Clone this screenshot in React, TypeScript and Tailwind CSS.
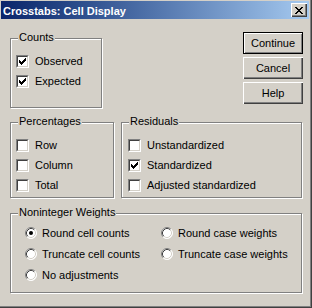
import type { ReactNode } from "react";

const FONT = { fontFamily: '"Liberation Sans", Arial, sans-serif' };

function CheckMark() {
  // classic 7x7 pixel tick
  const px = [
    [6, 0], [5, 1], [6, 1], [0, 2], [4, 2], [5, 2], [6, 2],
    [0, 3], [1, 3], [3, 3], [4, 3], [5, 3],
    [0, 4], [1, 4], [2, 4], [3, 4], [4, 4],
    [1, 5], [2, 5], [3, 5], [2, 6],
  ];
  return (
    <svg width="7" height="7" viewBox="0 0 7 7" shapeRendering="crispEdges">
      {px.map(([x, y]) => (
        <rect key={`${x}-${y}`} x={x} y={y} width="1" height="1" fill="#000" />
      ))}
    </svg>
  );
}

function Checkbox({ label, checked }: { label: string; checked?: boolean }) {
  return (
    <div className="flex items-center h-[13px] gap-[6px]">
      <div className="w-[13px] h-[13px] flex border border-t-[#808080] border-l-[#808080] border-r-white border-b-white">
        <div className="flex-1 flex items-center justify-center bg-white border border-t-[#404040] border-l-[#404040] border-r-[#d4d0c8] border-b-[#d4d0c8]">
          {checked && <CheckMark />}
        </div>
      </div>
      <span className="text-[11px] leading-[13px] text-black whitespace-nowrap">{label}</span>
    </div>
  );
}

function Radio({ label, checked }: { label: string; checked?: boolean }) {
  return (
    <div className="flex items-center h-[12px] gap-[5px]">
      <svg width="12" height="12" viewBox="0 0 12 12">
        <circle cx="6" cy="6" r="5.5" fill="#fff" />
        <path d="M2.11 9.89 A5.5 5.5 0 0 1 9.89 2.11" stroke="#808080" fill="none" />
        <path d="M9.89 2.11 A5.5 5.5 0 0 1 2.11 9.89" stroke="#fff" fill="none" />
        <path d="M2.82 9.18 A4.5 4.5 0 0 1 9.18 2.82" stroke="#404040" fill="none" />
        <path d="M9.18 2.82 A4.5 4.5 0 0 1 2.82 9.18" stroke="#d4d0c8" fill="none" />
        {checked && <circle cx="6" cy="6" r="2" fill="#000" />}
      </svg>
      <span className="text-[11px] leading-[13px] text-black whitespace-nowrap">{label}</span>
    </div>
  );
}

function Group({ title, className, children }: { title: string; className: string; children: ReactNode }) {
  return (
    <div
      className={`relative border border-[#808080] shadow-[1px_1px_0_#fff,inset_1px_1px_0_#fff] ${className}`}
    >
      <span className="absolute top-[-8px] left-[7px] px-[1px] bg-[#d4d0c8] text-[11px] leading-[13px] text-black">
        {title}
      </span>
      {children}
    </div>
  );
}

function Button({ label, isDefault }: { label: string; isDefault?: boolean }) {
  return (
    <div
      className={
        isDefault
          ? "w-[60px] h-[22px] flex items-center justify-center border border-black shadow-[inset_1px_1px_0_#fff,inset_-1px_-1px_0_#808080] text-[11px] text-black"
          : "w-[60px] h-[22px] flex items-center justify-center shadow-[inset_1px_1px_0_#fff,inset_-1px_-1px_0_#404040,inset_-2px_-2px_0_#808080] text-[11px] text-black"
      }
    >
      {label}
    </div>
  );
}

export default function App() {
  return (
    <div
      style={FONT}
      className="w-[312px] h-[308px] bg-[#d4d0c8] flex flex-col shadow-[inset_-1px_-1px_0_#404040,inset_-2px_-2px_0_#808080] overflow-hidden"
    >
      {/* Title bar */}
      <div className="mt-[1px] ml-[1px] mr-[3px] h-[18px] flex items-center justify-between pl-[2px] pr-[2px] bg-gradient-to-r from-[#0a246a] to-[#a6caf0]">
        <span className="text-[11px] font-bold text-white leading-[18px] pt-[1px]">Crosstabs: Cell Display</span>
        <div className="w-[16px] h-[14px] flex items-center justify-center bg-[#d4d0c8] shadow-[inset_1px_1px_0_#fff,inset_-1px_-1px_0_#404040,inset_-2px_-2px_0_#808080]">
          <svg width="8" height="7" viewBox="0 0 8 7" shapeRendering="crispEdges">
            <path d="M0 0h2v1h-2zM6 0h2v1h-2zM1 1h2v1h-2zM5 1h2v1h-2zM2 2h4v1h-4zM3 3h2v1h-2zM2 4h4v1h-4zM1 5h2v1h-2zM5 5h2v1h-2zM0 6h2v1h-2zM6 6h2v1h-2z" fill="#000" />
          </svg>
        </div>
      </div>

      <div className="flex flex-col pl-[10px]">
        {/* Counts + buttons */}
        <div className="flex items-start">
          <Group title="Counts" className="mt-[19px] w-[92px] h-[70px] pt-[16px] pl-[5px]">
            <div className="flex flex-col gap-[7px]">
              <Checkbox label="Observed" checked />
              <Checkbox label="Expected" checked />
            </div>
          </Group>
          <div className="mt-[13px] ml-[141px] flex flex-col gap-[3px]">
            <Button label="Continue" isDefault />
            <Button label="Cancel" />
            <Button label="Help" />
          </div>
        </div>

        {/* Percentages + Residuals */}
        <div className="flex mt-[14px]">
          <Group title="Percentages" className="w-[104px] h-[76px] pt-[16px] pl-[5px]">
            <div className="flex flex-col gap-[7px]">
              <Checkbox label="Row" />
              <Checkbox label="Column" />
              <Checkbox label="Total" />
            </div>
          </Group>
          <Group title="Residuals" className="ml-[7px] w-[181px] h-[76px] pt-[16px] pl-[6px]">
            <div className="flex flex-col gap-[7px]">
              <Checkbox label="Unstandardized" />
              <Checkbox label="Standardized" checked />
              <Checkbox label="Adjusted standardized" />
            </div>
          </Group>
        </div>

        {/* Noninteger weights */}
        <Group title="Noninteger Weights" className="mt-[15px] w-[292px] h-[80px] pt-[13px] pl-[14px]">
          <div className="grid grid-cols-[136px_1fr] gap-y-[9px]">
            <Radio label="Round cell counts" checked />
            <Radio label="Round case weights" />
            <Radio label="Truncate cell counts" />
            <Radio label="Truncate case weights" />
            <Radio label="No adjustments" />
          </div>
        </Group>
      </div>
    </div>
  );
}
